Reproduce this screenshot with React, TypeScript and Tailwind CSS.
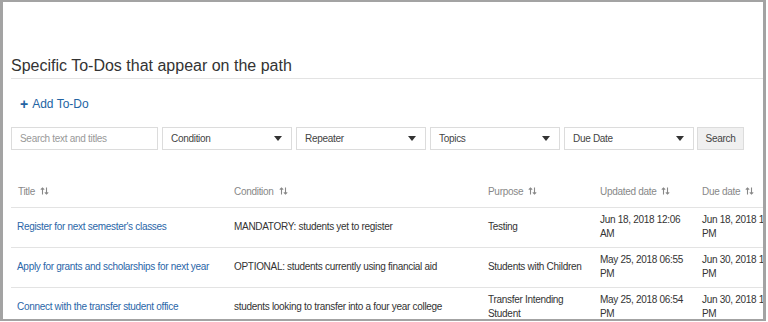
import React from "react";

const rows = [
  {
    title: "Register for next semester's classes",
    condition: "MANDATORY: students yet to register",
    purpose: "Testing",
    updated: "Jun 18, 2018 12:06 AM",
    due: "Jun 18, 2018 11:59 PM",
  },
  {
    title: "Apply for grants and scholarships for next year",
    condition: "OPTIONAL: students currently using financial aid",
    purpose: "Students with Children",
    updated: "May 25, 2018 06:55 PM",
    due: "Jun 30, 2018 11:59 PM",
  },
  {
    title: "Connect with the transfer student office",
    condition: "students looking to transfer into a four year college",
    purpose: "Transfer Intending Student",
    updated: "May 25, 2018 06:54 PM",
    due: "Jun 30, 2018 11:59 PM",
  },
];

function SortIcon() {
  return (
    <svg width="9" height="8" viewBox="0 0 9 8" className="inline-block ml-[5px] -mt-[1px]" fill="none" stroke="#888" strokeWidth="1.1">
      <path d="M2.5 7.5V1M0.8 2.7L2.5 1L4.2 2.7" />
      <path d="M6.5 0.5V7M4.8 5.3L6.5 7L8.2 5.3" />
    </svg>
  );
}

function Select({ label, width }: { label: string; width: string }) {
  return (
    <div className={`${width} h-[23px] border border-[#dcdcdc] bg-white flex items-center justify-between pl-[8px] pr-[9px] text-[10px] tracking-[-0.3px] text-[#444]`}>
      <span>{label}</span>
      <svg width="8" height="5" viewBox="0 0 8 5">
        <path d="M0 0H8L4 5Z" fill="#333" />
      </svg>
    </div>
  );
}

export default function App() {
  return (
    <div className="w-[768px] h-[322px] bg-white font-['Liberation_Sans',Arial,sans-serif]">
      <div className="w-[766px] h-[321px] border-t-2 border-l-[3px] border-r-[3px] border-b-2 border-[#a3a3a3] overflow-hidden">
        <div className="pt-[53px] pl-[8px]">
          <h2 className="text-[16px] text-[#333] leading-[22px] pb-[1px] border-b border-[#e3e3e3]">
            Specific To-Dos that appear on the path
          </h2>
          <div className="mt-[17px] ml-[9px] flex items-center text-[12px] text-[#2364a3] leading-[16px]">
            <span className="font-bold text-[14px] mr-[4px] leading-[14px]">+</span>
            <span>Add To-Do</span>
          </div>
          <div className="mt-[15px] flex items-center gap-[4px]">
            <div className="w-[147px] h-[23px] border border-[#dcdcdc] flex items-center pl-[8px] text-[10px] tracking-[-0.3px] text-[#999]">
              Search text and titles
            </div>
            <Select label="Condition" width="w-[130px]" />
            <Select label="Repeater" width="w-[130px]" />
            <Select label="Topics" width="w-[130px]" />
            <Select label="Due Date" width="w-[130px]" />
            <div className="ml-[-1px] w-[47px] h-[23px] border border-[#dcdcdc] bg-[#f0f0f0] flex items-center justify-center text-[10px] tracking-[-0.3px] text-[#444]">
              Search
            </div>
          </div>
          <table className="mt-[30px] table-fixed border-collapse w-[784px] text-[10px] tracking-[-0.3px] leading-[14px]">
            <colgroup>
              <col className="w-[216px]" />
              <col className="w-[254px]" />
              <col className="w-[112px]" />
              <col className="w-[102px]" />
              <col className="w-[100px]" />
            </colgroup>
            <thead>
              <tr className="border-b border-[#e3e3e3] text-[#888] text-left">
                {["Title", "Condition", "Purpose", "Updated date", "Due date"].map((h) => (
                  <th key={h} className="font-normal px-[7px] pb-[8px] pt-0 h-[27px] align-bottom whitespace-nowrap">
                    {h}
                    <SortIcon />
                  </th>
                ))}
              </tr>
            </thead>
            <tbody>
              {rows.map((r) => (
                <tr key={r.title} className="border-b border-[#e3e3e3] text-[#333] h-[40px]">
                  <td className="px-[6px] text-[#2a66a8] align-middle">{r.title}</td>
                  <td className="px-[7px] align-middle">{r.condition}</td>
                  <td className="px-[7px] align-middle">{r.purpose}</td>
                  <td className="px-[7px] align-middle">{r.updated}</td>
                  <td className="px-[7px] align-middle">{r.due}</td>
                </tr>
              ))}
            </tbody>
          </table>
        </div>
      </div>
    </div>
  );
}
